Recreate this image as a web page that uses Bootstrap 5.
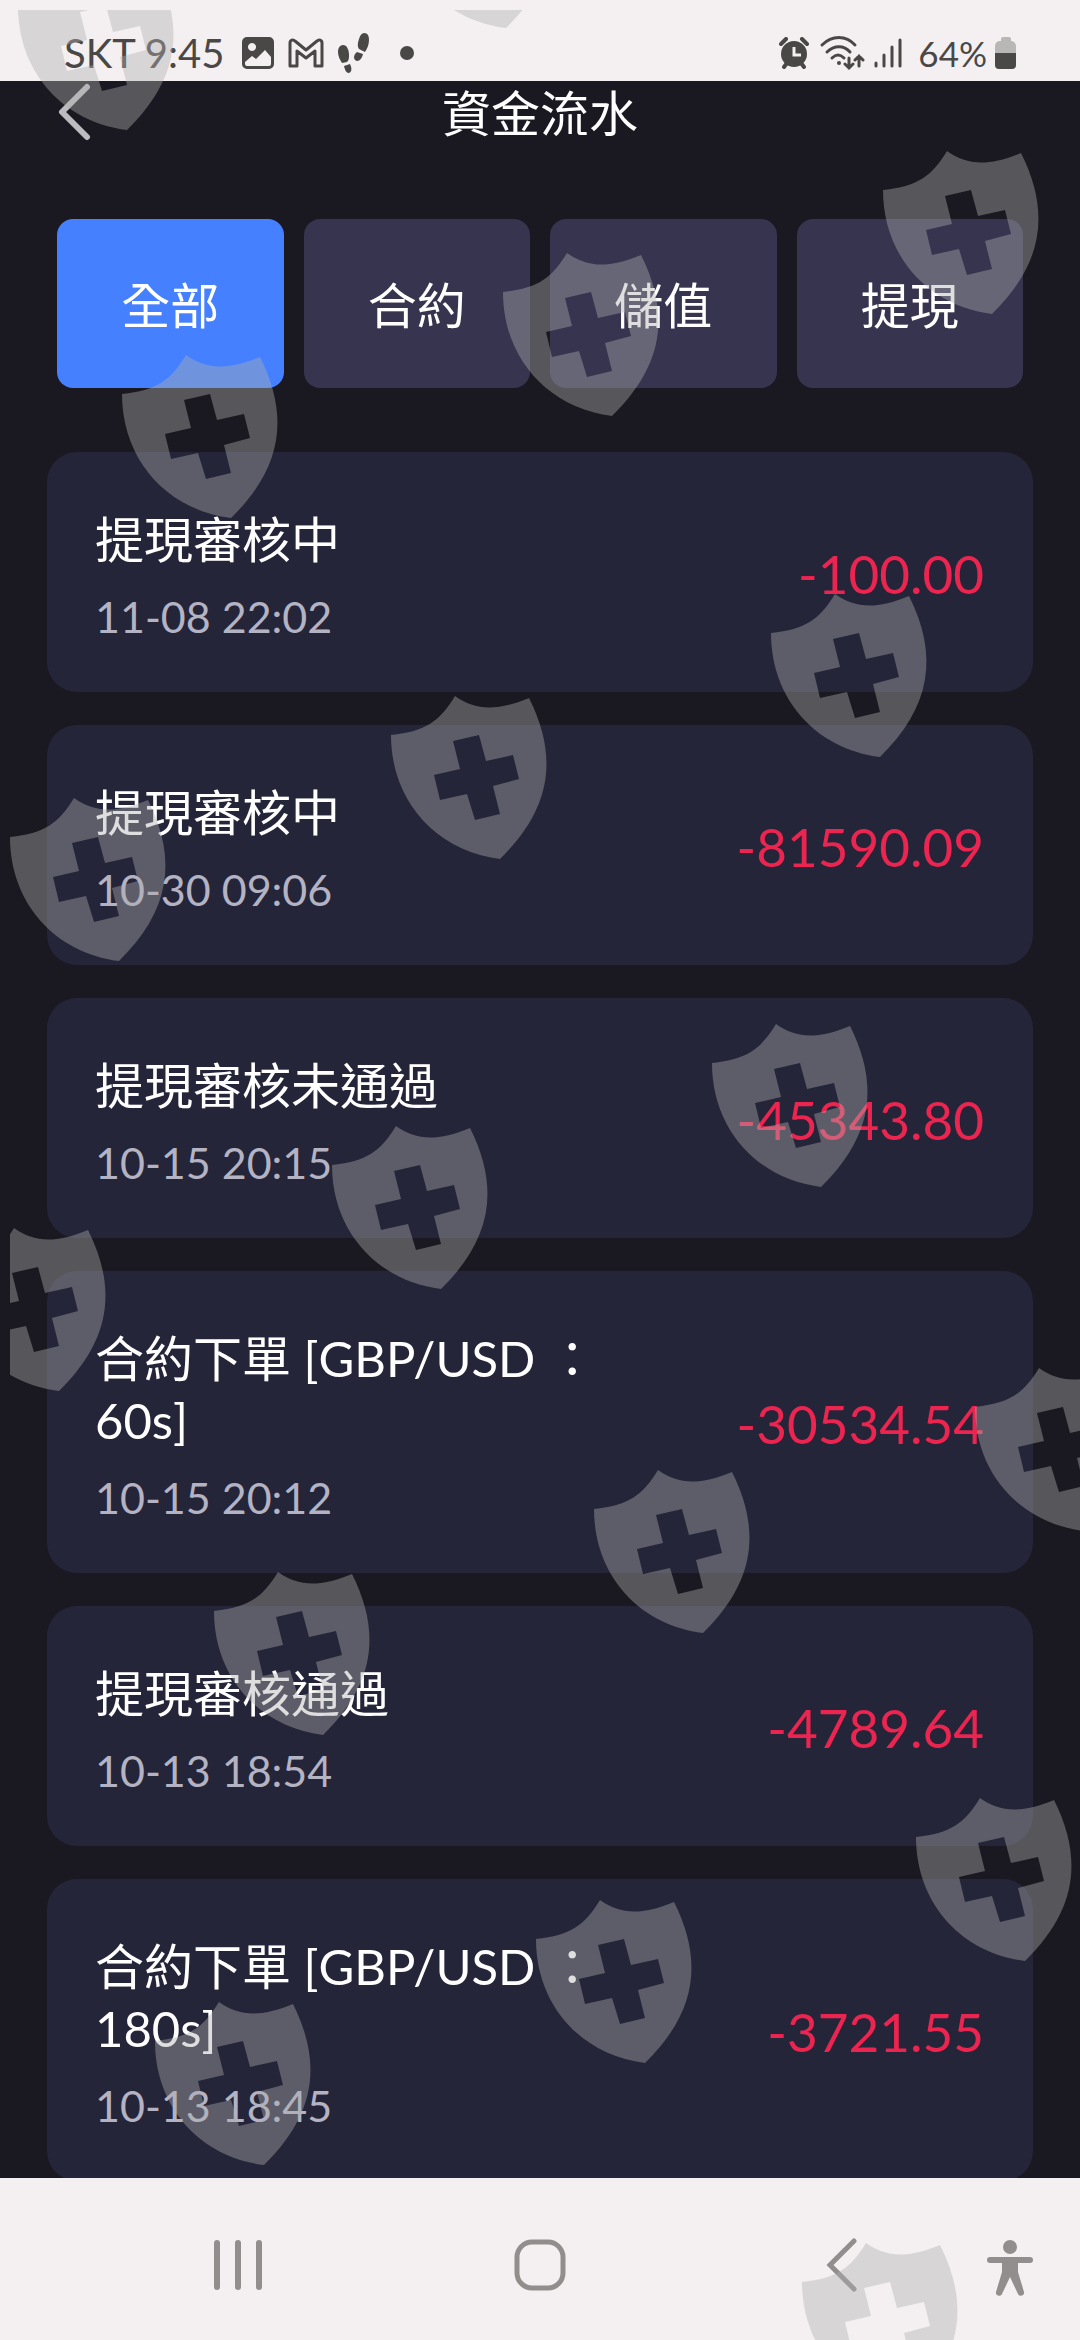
<!DOCTYPE html>
<html lang="zh-Hant">
<head>
<meta charset="utf-8">
<meta name="viewport" content="width=device-width, initial-scale=1">
<title>資金流水</title>
<link href="https://cdn.jsdelivr.net/npm/bootstrap@5.3.0/dist/css/bootstrap.min.css" rel="stylesheet">
<style>
  body { font-family: Lato, "Noto Sans CJK TC", sans-serif; background: #1a1820; color: #fff; }
  .sys-bar { background: #f4f0f1; color: #4a4747; }
  .status-bar { height: 81px; padding: 24px 64px 0 64px; font-size: 40px; line-height: 58px; }
  .status-bar svg { flex: none; }
  .status-left { gap: 14px; }
  .status-left span { margin-right: 4px; }
  .status-right { gap: 8px; }
  .battery-text { font-size: 35px; margin-left: 8px; }
  .page-head { height: 64px; padding: 0 56px; }
  .page-head h1 { font-size: 49px; line-height: 64px; font-weight: 400; }
  .back-btn { width: 36px; height: 64px; color: #bcbbc0; }
  .tab-row { padding: 74px 57px 64px; gap: 20px; }
  .tab-row .btn { height: 169px; padding: 10px 0 6px; border: 0; border-radius: 16px; font-size: 49px; color: #fff; background: #36344e; }
  .tab-row .btn.active { background: #4480ff; color: #fff; }
  .flow-list { padding: 0 47px; gap: 33px; }
  .flow-item { background: #242539; border-radius: 30px; padding: 56px 49px 50px 48px; color: #fff; }
  .flow-text { width: 60%; }
  .flow-title { font-size: 49px; line-height: 62px; font-weight: 400; }
  .flow-time { font-size: 43px; line-height: 50px; margin-top: 22px; color: #b4b3c3; }
  .flow-amount { font-size: 53px; line-height: 62px; padding-bottom: 2px; color: #ec2450; }
  .nav-keys { height: 162px; padding: 12px 87px 0; color: #928e8e; }
  .nav-keys .btn { color: inherit; border: 0; padding: 0; }
  .nav-keys .a11y-key { right: 46px; top: 61px; line-height: 0; }
  .shield-layer { left: 10px; top: 10px; right: 0; bottom: 0; overflow: hidden; pointer-events: none; z-index: 5; }
</style>
</head>
<body>
<div class="position-relative vh-100 d-flex flex-column overflow-hidden">

  <header class="sys-bar status-bar d-flex justify-content-between align-items-center flex-shrink-0">
    <div class="status-left d-flex align-items-center">
      <span>SKT 9:45</span>
      <svg width="32" height="32" viewBox="0 0 32 32"><path fill="currentColor" fill-rule="evenodd" d="M5 0h22a5 5 0 0 1 5 5v22a5 5 0 0 1-5 5H5a5 5 0 0 1-5-5V5a5 5 0 0 1 5-5zM10 6a4 4 0 1 0 .01 0zM3 27q0 2 2 2h22q2 0 2-2v-7l-6-7-9 9-4-3-7 6z"/></svg>
      <svg width="36" height="30" viewBox="0 0 36 30"><path fill="none" stroke="currentColor" stroke-width="3" stroke-linejoin="round" d="M2 5c0-3 3-4 5-2l11 9 11-9c2-2 5-1 5 2v23h-7V13l-9 7-9-7v15H2z"/></svg>
      <svg width="32" height="40" viewBox="0 0 32 40"><g fill="currentColor"><path d="M5 12c4 0 6 5 6 10 0 3 0 5-2 7l-5 1c-2-3-4-7-4-11 0-4 2-7 5-7zM6 33l6-2c2 4 2 8-1 9-3 0-4-3-5-7zM26 0c4 0 5 3 5 7 0 5-2 9-4 12l-6-3c-2-3-1-7 0-10 1-4 3-6 5-6zM19 19l6 2c-1 4-3 7-6 7-4-1-4-6 0-9z"/></g></svg>
      <svg width="45" height="14" viewBox="0 0 45 14"><circle cx="23" cy="7" r="7" fill="currentColor"/></svg>
    </div>
    <div class="status-right d-flex align-items-center">
      <svg width="30" height="32" viewBox="0 0 30 32"><circle cx="15" cy="17" r="13" fill="currentColor"/><path d="M2 7l5-5M28 7l-5-5M5 30l3-4M25 30l-3-4" stroke="currentColor" stroke-width="4" stroke-linecap="round"/><path d="M15 10v8h7" fill="none" stroke="#f4f0f1" stroke-width="3"/></svg>
      <svg width="48" height="38" viewBox="0 0 48 38"><g fill="none" stroke="currentColor" stroke-width="3" stroke-linecap="round"><path d="M5 11c10-10 24-10 33 0M10 18c7-7 17-7 23 0M15 24c4-4 8-4 12 0"/><path d="M32 24v10M28 30l4 4 4-4M42 32V22M38 26l4-4 4 4"/></g><circle cx="22" cy="29" r="2" fill="currentColor"/></svg>
      <svg width="29" height="32" viewBox="0 0 29 32"><path d="M3 26v3M11 18v11M19 10v19M27 3v26" stroke="currentColor" stroke-width="3" stroke-linecap="round"/></svg>
      <span class="battery-text">64%</span>
      <svg width="21" height="32" viewBox="0 0 21 32"><path fill="#b9b6b6" d="M6 2a2 2 0 0 1 2-2h6a2 2 0 0 1 2 2v2a5 5 0 0 1 5 5v7H0V9a5 5 0 0 1 6-5z"/><path fill="currentColor" d="M0 16h21v12a4 4 0 0 1-4 4H4a4 4 0 0 1-4-4z"/></svg>
    </div>
  </header>

  <main class="flex-grow-1 overflow-hidden">
    <div class="page-head d-flex align-items-center justify-content-between">
      <button type="button" class="btn back-btn p-0 border-0" aria-label="返回"><svg class="d-block" width="36" height="60" viewBox="0 0 36 60"><path d="M31 4L6 29l25 25" fill="none" stroke="currentColor" stroke-width="6" stroke-linecap="round" stroke-linejoin="round"/></svg></button>
      <h1 class="m-0">資金流水</h1>
      <span class="back-btn"></span>
    </div>

    <nav class="tab-row d-flex">
      <button type="button" class="btn active w-100">全部</button>
      <button type="button" class="btn w-100">合約</button>
      <button type="button" class="btn w-100">儲值</button>
      <button type="button" class="btn w-100">提現</button>
    </nav>

    <section class="flow-list d-flex flex-column">
      <article class="flow-item d-flex justify-content-between align-items-center">
        <div class="flow-text"><h2 class="flow-title m-0">提現審核中</h2><div class="flow-time">11-08 22:02</div></div>
        <div class="flow-amount">-100.00</div>
      </article>
      <article class="flow-item d-flex justify-content-between align-items-center">
        <div class="flow-text"><h2 class="flow-title m-0">提現審核中</h2><div class="flow-time">10-30 09:06</div></div>
        <div class="flow-amount">-81590.09</div>
      </article>
      <article class="flow-item d-flex justify-content-between align-items-center">
        <div class="flow-text"><h2 class="flow-title m-0">提現審核未通過</h2><div class="flow-time">10-15 20:15</div></div>
        <div class="flow-amount">-45343.80</div>
      </article>
      <article class="flow-item d-flex justify-content-between align-items-center">
        <div class="flow-text"><h2 class="flow-title m-0">合約下單 [GBP/USD ： 60s]</h2><div class="flow-time">10-15 20:12</div></div>
        <div class="flow-amount">-30534.54</div>
      </article>
      <article class="flow-item d-flex justify-content-between align-items-center">
        <div class="flow-text"><h2 class="flow-title m-0">提現審核通過</h2><div class="flow-time">10-13 18:54</div></div>
        <div class="flow-amount">-4789.64</div>
      </article>
      <article class="flow-item d-flex justify-content-between align-items-center">
        <div class="flow-text"><h2 class="flow-title m-0">合約下單 [GBP/USD ： 180s]</h2><div class="flow-time">10-13 18:45</div></div>
        <div class="flow-amount">-3721.55</div>
      </article>
    </section>
  </main>

  <footer class="sys-bar nav-keys position-relative d-flex align-items-stretch flex-shrink-0">
    <button type="button" class="btn w-100" aria-label="最近使用"><svg width="48" height="52" viewBox="0 0 48 52"><path d="M3 4v44M24 4v44M45 4v44" stroke="currentColor" stroke-width="6" stroke-linecap="round"/></svg></button>
    <button type="button" class="btn w-100" aria-label="主畫面"><svg width="54" height="54" viewBox="0 0 54 54"><rect x="4" y="4" width="46" height="46" rx="15" fill="none" stroke="currentColor" stroke-width="5"/></svg></button>
    <button type="button" class="btn w-100" aria-label="返回"><svg width="34" height="56" viewBox="0 0 34 56"><path d="M29 4L5 28l24 24" fill="none" stroke="currentColor" stroke-width="5" stroke-linecap="round" stroke-linejoin="miter"/></svg></button>
    <button type="button" class="btn a11y-key position-absolute" aria-label="協助工具"><svg width="48" height="58" viewBox="0 0 48 58"><circle cx="24" cy="8" r="7" fill="currentColor"/><path fill="currentColor" d="M4 18h40a3 3 0 0 1 0 6H32v9l6 20c1 4-5 5-6 2l-8-17-8 17c-1 3-7 2-6-2l6-20v-9H4a3 3 0 0 1 0-6z"/></svg></button>
  </footer>

  <div class="shield-layer position-absolute">
    <svg class="d-block w-100 h-100" aria-hidden="true">
      <defs>
        <path id="shield" fill-rule="evenodd" d="M0 39C35 35 48 26 64 0C84 14 104 16 138 2C168 62 160 113 109 163C45 155 0 105 0 39zM62 45L88 39L95 65L122 59L128 83L102 90L109 118L84 124L76 98L49 104L43 79L69 73z"/>
      </defs>
      <g transform="translate(-10 -10)" fill="#afafaf" fill-opacity=".41">
        <use href="#shield" x="18" y="-33"/>
        <use href="#shield" x="397" y="-135"/>
        <use href="#shield" x="883" y="151"/>
        <use href="#shield" x="503" y="253"/>
        <use href="#shield" x="122" y="355"/>
        <use href="#shield" x="771" y="594"/>
        <use href="#shield" x="391" y="696"/>
        <use href="#shield" x="10" y="798"/>
        <use href="#shield" x="712" y="1024"/>
        <use href="#shield" x="332" y="1126"/>
        <use href="#shield" x="-50" y="1228"/>
        <use href="#shield" x="975" y="1368"/>
        <use href="#shield" x="594" y="1470"/>
        <use href="#shield" x="214" y="1572"/>
        <use href="#shield" x="916" y="1798"/>
        <use href="#shield" x="536" y="1900"/>
        <use href="#shield" x="155" y="2002"/>
        <use href="#shield" x="802" y="2243"/>
      </g>
    </svg>
  </div>
</div>
<script src="https://cdn.jsdelivr.net/npm/bootstrap@5.3.0/dist/js/bootstrap.bundle.min.js"></script>
</body>
</html>
